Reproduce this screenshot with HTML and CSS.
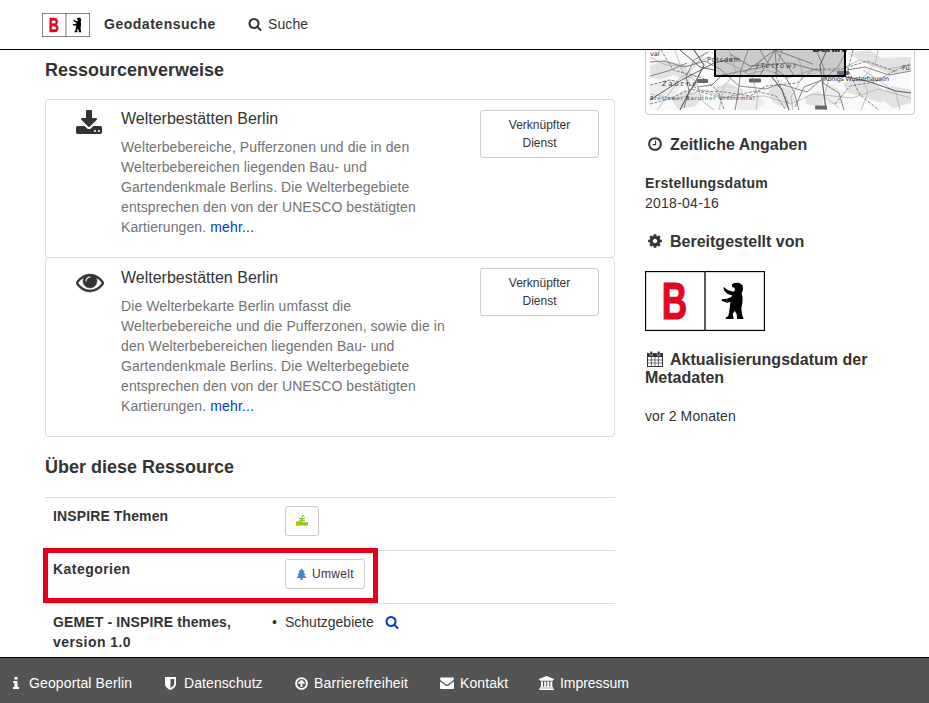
FILE: index.html
```html
<!DOCTYPE html>
<html lang="de">
<head>
<meta charset="utf-8">
<title>Geodatensuche</title>
<link rel="stylesheet" href="styles.css">
</head>
<body>
<svg class="defs" aria-hidden="true">
  <symbol id="search" viewBox="0 0 1792 1792"><path d="M1216 832q0-185-131.500-316.500t-316.500-131.500-316.500 131.500-131.500 316.500 131.500 316.500 316.500 131.500 316.500-131.500 131.500-316.500zm512 832q0 52-38 90t-90 38q-54 0-90-38l-343-342q-179 124-399 124-143 0-273.500-55.500t-225-150-150-225-55.500-273.500 55.500-273.500 150-225 225-150 273.500-55.500 273.500 55.500 225 150 150 225 55.500 273.500q0 220-124 399l343 343q37 37 37 90z"/></symbol>
  <symbol id="bear-logo" viewBox="0 0 120 60">
    <rect x=".5" y=".5" width="119" height="59" fill="#fff" stroke="#000" stroke-width="1.300"/>
    <path d="M60 0V60" stroke="#222" stroke-width="1.500"/>
    <text transform="translate(16.700 47.700) scale(.69 1)" font-family="Liberation Sans" font-weight="bold" font-size="51" fill="#e40521" stroke="#e40521" stroke-width="1.200">B</text>
    <path transform="translate(-5 -11) scale(.33333)" d="M276 73l7-4 14-1 6 5 5 3 1 13-4 11 3 13-1 17-3 16 3 21 4 10h-20l-1-15-6-9-6 8 3 16h-24l1-5 7-4 3-16 2-15 1-12-9 3-16-5-1-5 16-2 13-5 2-5-13-4-10-9-3-10 3-1 10 8 17 5 5-4-1-8-7-1z"/>
  </symbol>
</svg>

<header class="topbar">
  <svg class="brand-logo"><use href="#bear-logo"/></svg>
  <a class="brand">Geodatensuche</a>
  <a class="nav-search"><svg class="ico14"><use href="#search"/></svg>Suche</a>
</header>

<main class="content">
  <section class="primary">
    <h3>Ressourcenverweise</h3>
    <ul class="resources">
      <li class="resource first">
        <svg class="res-icon" viewBox="0 0 1792 1792"><path d="M1344 1344q0-26-19-45t-45-19-45 19-19 45 19 45 45 19 45-19 19-45zm256 0q0-26-19-45t-45-19-45 19-19 45 19 45 45 19 45-19 19-45zm128-224v320q0 40-28 68t-68 28h-1472q-40 0-68-28t-28-68v-320q0-40 28-68t68-28h465l135 136q58 56 136 56t136-56l136-136h464q40 0 68 28t28 68zm-325-569q17 41-14 70l-448 448q-18 19-45 19t-45-19l-448-448q-31-29-14-70 17-39 59-39h256v-448q0-26 19-45t45-19h256q26 0 45 19t19 45v448h256q42 0 59 39z"/></svg>
        <div class="res-body">
          <h4>Welterbestätten Berlin</h4>
          <p>Welterbebereiche, Pufferzonen und die in den<br>Welterbebereichen liegenden Bau- und<br>Gartendenkmale Berlins. Die Welterbegebiete<br>entsprechen den von der UNESCO bestätigten<br>Kartierungen. <a>mehr...</a></p>
        </div>
        <button class="service">Verknüpfter<br>Dienst</button>
      </li>
      <li class="resource second">
        <svg class="res-icon" viewBox="0 0 1792 1792"><path d="M1664 960q-152-236-381-353 61 104 61 225 0 185-131.500 316.500t-316.500 131.500-316.500-131.500-131.500-316.500q0-121 61-225-229 117-381 353 133 205 333.500 326.500t434.500 121.500 434.500-121.500 333.500-326.500zm-720-384q0-20-14-34t-34-14q-125 0-214.500 89.500t-89.500 214.500q0 20 14 34t34 14 34-14 14-34q0-86 61-147t147-61q20 0 34-14t14-34zm848 384q0 34-20 69-140 230-376.500 368.500t-499.500 138.500-499.500-139-376.500-368q-20-35-20-69t20-69q140-229 376.500-368t499.500-139 499.500 139 376.500 368q20 35 20 69z"/></svg>
        <div class="res-body">
          <h4>Welterbestätten Berlin</h4>
          <p>Die Welterbekarte Berlin umfasst die<br>Welterbebereiche und die Pufferzonen, sowie die in<br>den Welterbebereichen liegenden Bau- und<br>Gartendenkmale Berlins. Die Welterbegebiete<br>entsprechen den von der UNESCO bestätigten<br>Kartierungen. <a>mehr...</a></p>
        </div>
        <button class="service">Verknüpfter<br>Dienst</button>
      </li>
    </ul>

    <h3 class="about">Über diese Ressource</h3>
    <dl class="facts">
      <div class="fact">
        <dt class="inspire">INSPIRE Themen</dt>
        <dd><button class="tag"><svg class="theme" viewBox="0 0 12 12"><path d="M0 7.500h5l2 .8h5v3.200H0z" fill="#95c11f"/><path d="M0 7.500h3v4H0z" fill="#b5c900"/><path d="M5.800 7.500V4M5.800 5.500L3 4.300M5.800 5.200L9 4M5.800 3.500L7.500 1.200M3 6.800h6" fill="none" stroke="#76b82a" stroke-width="1.100"/></svg></button></dd>
      </div>
      <div class="fact">
        <dt class="kat">Kategorien</dt>
        <dd><button class="tag umwelt"><svg class="tree" viewBox="0 0 12 13"><path d="M6 0l3.500 3.500H8.200L10.300 7H9l2.500 3.300H7.200V12.500H4.800V10.300H.5L3 7H1.700L3.800 3.500H2.500z" fill="#428bca"/></svg>Umwelt</button></dd>
        <div class="highlight"></div>
      </div>
      <div class="fact">
        <dt class="gemet">GEMET - INSPIRE themes,<br><span class="version">version 1.0</span></dt>
        <dd class="bullet">Schutzgebiete<svg class="ico14"><use href="#search"/></svg></dd>
      </div>
    </dl>
  </section>

  <aside class="secondary">
    <div class="map">
      <svg viewBox="0 0 261 60" width="261" height="60">
        <rect width="261" height="60" fill="#fafafa"/>
        <g fill="#e2e2e2">
          <path d="M0 16l14-6 18 4 14 12-9 6-13-7-15 5-9-3zM20 48l14-8 20 5-8 11-18 3zM64 38l14-5 16 7-8 10-18-1zM118 41l9-6 14 4 4 12-10 7-13-6zM155 46l13-5 9 7-8 9-13-3zM193 33l14-5 17 3 13 14-6 8-20-7-14-3zM197 3l22-3 13 8 29-1v14l-22 3-20-9zM226 45l16-9 19 4v13l-18 5z"/>
        </g>
        <g fill="#eee"><path d="M0 34l20-5 12 6-10 13-22 3zM85 51l20-8 11 10-9 7H88zM178 33l17 9-3 12-20 1z"/></g>
        <g fill="none" stroke="#b0b0b0" stroke-width=".8">
          <path d="M0 7l16 8 23 1 20-9 24 8 15 9 19-4 21 8 28-9 22 2 21-11 28 9 24-4M7 60l12-16 10-15 12-9 13-15M25 0l8 23 13 8 6 20 12 9M69 60l5-24 12-14-7-22M106 60l2-14-6-19 9-17M143 60l-2-13 12-21-4-18M189 58l-15-12 5-17-9-11M211 60l7-17-5-15 12-14 3-14M250 60l-4-17-15-11-18-12M0 44l27 5 26-9 24 8 38-2 26 8 22-10 39 4 26-9 33 9"/>
        </g>
        <g fill="none" stroke="#858585" stroke-width="1">
          <path d="M0 12l14-1 21 6 20-6 15 8 19 17 27 3 14-5 27 8 14-12M0 26l18-5 19-8M47 37l15-2 10-10 26-5 19-4M197 20l18-3 24 8 22-4"/>
          <path d="M34 58l5-17-3-14 8-17 14-8M98 0l-7 20-3 24-3 16M110 0l7 12 18 14 9 16 5 18M166 0l8 18-1 15 16 10 5 17M197 0l-9 17-16 13-18 7-9 20"/>
          <path d="M125 0L95 22M125 0l-15 25M125 0l2 25M125 0l19 25M125 0l38 14M80 4l20 12 40-3 30 8" stroke="#777"/>
        </g>
        <g fill="none" stroke="#777" stroke-width=".9" stroke-dasharray="3 1.500">
          <path d="M0 35l20-5 18 4 14 7 22 1 26 4 16-10 31-3 17-14 28 0 25-8 30 11M0 54l19-5 22-10 31 9 34-7 20 5 10 14M11 0l12 20 30 8 15 13 6 19M185 54l15-18 25-4 19-11 16-7M203 0l-5 20 12 25 19 15M132 0l-7 24 13 29"/>
        </g>
        <g fill="none" stroke="#666" stroke-width="1.200"><path d="M44 0l10 15-9 18-8 13-7 14M122 27l10 13 7 20M177 0l-7 15 3 22 3 23"/></g>
        <g fill="none" stroke="#606060" stroke-width="1"><path d="M0 50l28-18 36-19 22-5M30 0l20 17 14 3M196 27l21 4 29 10 15 2"/></g>
        <g fill="#666"><rect x="47" y="29" width="11" height="4" rx="1"/><rect x="99" y="28.500" width="12" height="4" rx="1"/><rect x="187" y="21" width="12" height="4" rx="1"/><rect x="165" y="55.500" width="12" height="4" rx="1"/></g>
        <rect x="65" y="-10" width="130" height="36" fill="#858585" fill-opacity=".4" stroke="#000" stroke-width="2"/>
        <g class="map-labels">
          <text x="57" y="12" textLength="33">Potsdam</text><text x="174" y="30.500" textLength="65">Königs Wusterhausen</text>
          <text x="12" y="36" font-style="italic" letter-spacing="2">Zauche</text>
          <text x="106" y="18" font-style="italic" letter-spacing="2">(Teltow)</text>
          <text x="0" y="6">val</text><text x="252" y="20">Fü</text>
          <text x="0" y="50" font-size="5" letter-spacing="1">Breslower  Baruther  Urstromtal</text>
          <text x="162" y="2" font-size="12" font-weight="bold" textLength="33">Berlin</text>
        </g>
      </svg>
    </div>
    <h4 class="side-title time"><svg class="side-icon" viewBox="0 0 1792 1792"><path d="M1024 544v448q0 14-9 23t-23 9h-320q-14 0-23-9t-9-23v-64q0-14 9-23t23-9h224v-352q0-14 9-23t23-9h64q14 0 23 9t9 23zm416 352q0-148-73-273t-198-198-273-73-273 73-198 198-73 273 73 273 198 198 273 73 273-73 198-198 73-273zm224 0q0 209-103 385.500t-279.500 279.500-385.500 103-385.500-103-279.500-279.500-103-385.500 103-385.500 279.500-279.500 385.500-103 385.500 103 279.500 279.500 103 385.500z"/></svg>Zeitliche Angaben</h4>
    <p class="created"><strong>Erstellungsdatum</strong><br><span class="date">2018-04-16</span></p>
    <h4 class="side-title provider"><svg class="side-icon" viewBox="0 0 1792 1792"><path d="M1152 896q0-106-75-181t-181-75-181 75-75 181 75 181 181 75 181-75 75-181zm512-109v222q0 12-8 23t-20 13l-185 28q-19 54-39 91 35 50 107 138 10 12 10 25t-9 23q-27 37-99 108t-94 71q-12 0-26-9l-138-108q-44 23-91 38-16 136-29 186-7 28-36 28h-222q-14 0-24.500-8.500t-11.500-21.500l-28-184q-49-16-90-37l-141 107q-10 9-25 9-14 0-25-11-126-114-165-168-7-10-7-23 0-12 8-23 15-21 51-66.500t54-70.500q-27-50-41-99l-183-27q-13-2-21-12.500t-8-23.500v-222q0-12 8-23t19-13l186-28q14-46 39-92-40-57-107-138-10-12-10-24 0-10 9-23 26-36 98.500-107.500t94.500-71.500q13 0 26 10l138 107q44-23 91-38 16-136 29-186 7-28 36-28h222q14 0 24.500 8.500t11.500 21.500l28 184q49 16 90 37l142-107q9-9 24-9 13 0 25 10 129 119 165 170 7 8 7 22 0 12-8 23-15 21-51 66.500t-54 70.500q26 50 41 98l183 28q13 2 21 12.500t8 23.500z"/></svg>Bereitgestellt von</h4>
    <svg class="provider-logo"><use href="#bear-logo"/></svg>
    <h4 class="side-title updated"><svg class="side-icon" viewBox="0 0 16 16"><path d="M0 2h16v14H0zM1 6v9h14V6z" fill-rule="evenodd"/><path d="M4.500 6v9M8 6v9M11.500 6v9M1 9h14M1 12h14" stroke="#555" stroke-width=".8"/><path d="M3 .3h2.600v4H3zM10.400 .3H13v4h-2.600z" stroke="#fff" stroke-width=".5"/></svg>Aktualisierungsdatum der Metadaten</h4>
    <p class="ago">vor 2 Monaten</p>
  </aside>
</main>

<footer class="footer">
  <a class="f1"><svg viewBox="0 0 6 12" width="6" height="12"><path d="M1.500 0h3v2.500h-3zM.3 4h4.200v6H6v2H0v-2h1.400V6H.3z"/></svg>Geoportal Berlin</a>
  <a class="f2"><svg viewBox="0 0 11 13" width="11" height="13"><path fill-rule="evenodd" d="M0 0h11v7q0 3.500-5.500 6Q0 10.500 0 7zm5.500 2v9Q9.200 9 9.200 7V2z"/></svg>Datenschutz</a>
  <a class="f3"><svg viewBox="0 0 13 13" width="13" height="13"><circle cx="6.500" cy="6.500" r="5.400" fill="none" stroke="#fff" stroke-width="1.900"/><path d="M6.500 2.500l3.600 3.600-1.100 1.100-1.500-1.400V10h-2V5.800L4 7.200 2.900 6.100z"/></svg>Barrierefreiheit</a>
  <a class="f4"><svg viewBox="0 0 14 12" width="14" height="12"><path d="M0 1.500Q0 .5 1 .5h12q1 0 1 1Q14 3 12 4.500L8 7.300Q7 8 6 7.300L2 4.500Q0 3 0 1.500zM0 4.500l5.500 4q1.500 1 3 0l5.500-4V11q0 1-1 1H1q-1 0-1-1z"/></svg>Kontakt</a>
  <a class="f5"><svg viewBox="0 0 15 14" width="15" height="14"><path d="M7.500 0L15 3v1h-1v.8H1V4H0V3zM2 5.500h2v5.300h1.200V5.500h2v5.300h1V5.500h2v5.300h1.100V5.500h2v5.300h.7v1H1v-1h1zM.5 12.200h14L15 14H0z"/></svg>Impressum</a>
</footer>
</body>
</html>
```

FILE: styles.css
```css
* { box-sizing: border-box; }
body {
  margin: 0;
  height: 703px;
  display: flex;
  flex-direction: column;
  overflow: hidden;
  font: 14px/20px "Liberation Sans", Arial, sans-serif;
  color: #333;
  background: #fff;
}
h3, h4, p, ul, dl, dd { margin: 0; padding: 0; }
button { font: inherit; color: inherit; background: #fff; border: 1px solid #ccc; border-radius: 3px; }
svg { fill: currentColor; flex: none; }
.defs { position: absolute; width: 0; height: 0; }
.ico14 { width: 14px; height: 14px; }

.topbar {
  flex: none;
  height: 50px;
  padding: 0 42px 1px;
  display: flex;
  align-items: center;
  border-bottom: 1px solid #000;
}
.brand-logo { width: 48px; height: 24px; margin-top: 1px; fill: #000; }
.brand { margin-left: 14px; width: 144px; font-weight: bold; letter-spacing: .52px; }
.nav-search { display: flex; align-items: center; gap: 6px; letter-spacing: .1px; }

.content { flex: 1; min-height: 0; overflow: hidden; display: flex; gap: 30px; padding-left: 45px; }
.primary { width: 570px; }
.primary h3 { margin-top: 10px; font-size: 18px; line-height: 20px; }
.resources { list-style: none; margin-top: 19px; }
.resource {
  display: flex;
  align-items: flex-start;
  padding: 10px 15px;
  border: 1px solid #ddd;
  border-radius: 4px;
}
.first { height: 159px; }
.second { height: 180px; margin-top: -1px; }
.res-icon { width: 28px; height: 28px; margin-left: 15px; }
.first .res-icon { margin-left: 14px; margin-right: 1px; }
.second .res-icon { stroke: currentColor; stroke-width: 30; }
.res-body { width: 359px; margin-left: 17px; }
.res-body h4 { font-size: 16px; font-weight: normal; line-height: 18px; }
.second .res-body h4 { margin-top: 1px; }
.res-body p { margin-top: 9px; color: #737373; white-space: nowrap; letter-spacing: .09px; }
.res-body a { color: #0039cf; letter-spacing: .15px; }
.service { width: 119px; height: 48px; padding: 0; font-size: 12px; line-height: 18px; }

.primary .about { margin-top: 20px; }
.facts { margin-top: 20px; }
.fact { position: relative; display: flex; height: 53px; padding: 8px; border-top: 1px solid #ddd; }
.fact dt { width: 232px; font-weight: bold; white-space: nowrap; }
.tag { display: flex; align-items: center; height: 30px; padding: 0 10px; font-size: 12px; }
.theme { width: 12px; height: 12px; margin-bottom: 2px; }
.tree { width: 11px; height: 13px; margin-right: 5px; }
.umwelt { width: 80px; letter-spacing: .3px; }
.inspire { letter-spacing: .12px; }
.kat { letter-spacing: .45px; }
.gemet { letter-spacing: .13px; }
.version { letter-spacing: .45px; }
.bullet { display: flex; align-items: center; height: 20px; }
.bullet::before { content: "•"; width: 13px; margin-left: -13px; }
.bullet svg { margin-left: 11px; color: #0039cf; }
.highlight { position: absolute; left: -2px; top: -3px; width: 335px; height: 55px; border: 5px solid #e3001b; }

.secondary { width: 270px; }
.map { height: 65px; padding: 0 4px 4px; border: 1px solid #ccc; border-top: 0; border-radius: 0 0 4px 4px; }
.map svg { display: block; }
.map-labels { font: 6.500px "DejaVu Sans", sans-serif; fill: #333; }
.side-title { font-size: 16px; line-height: 18px; }
.side-icon { width: 16px; height: 16px; margin: 0 7px -2px 2px; }
.time { margin-top: 21px; }
.created { margin-top: 19px; }
.created strong { letter-spacing: .3px; }
.date { letter-spacing: .25px; }
.provider { margin-top: 20px; }
.provider-logo { display: block; width: 120px; height: 60px; margin-top: 20px; fill: #000; }
.updated { margin-top: 20px; }
.ago { margin-top: 19px; letter-spacing: .1px; }

.footer {
  flex: none;
  height: 46px;
  padding: 5px 0 0 13px;
  display: flex;
  align-items: flex-start;
  background: #545454;
  border-top: 1px solid #000;
  color: #fff;
}
.footer a { display: flex; align-items: center; height: 40px; white-space: nowrap; }
.f1 { width: 152px; gap: 10px; letter-spacing: .12px; }
.f2 { width: 130px; gap: 8px; letter-spacing: .08px; }
.f3 { width: 145px; gap: 6px; letter-spacing: .14px; }
.f4 { width: 99px; gap: 6px; letter-spacing: .1px; }
.f5 { gap: 6px; letter-spacing: -.05px; }
```
